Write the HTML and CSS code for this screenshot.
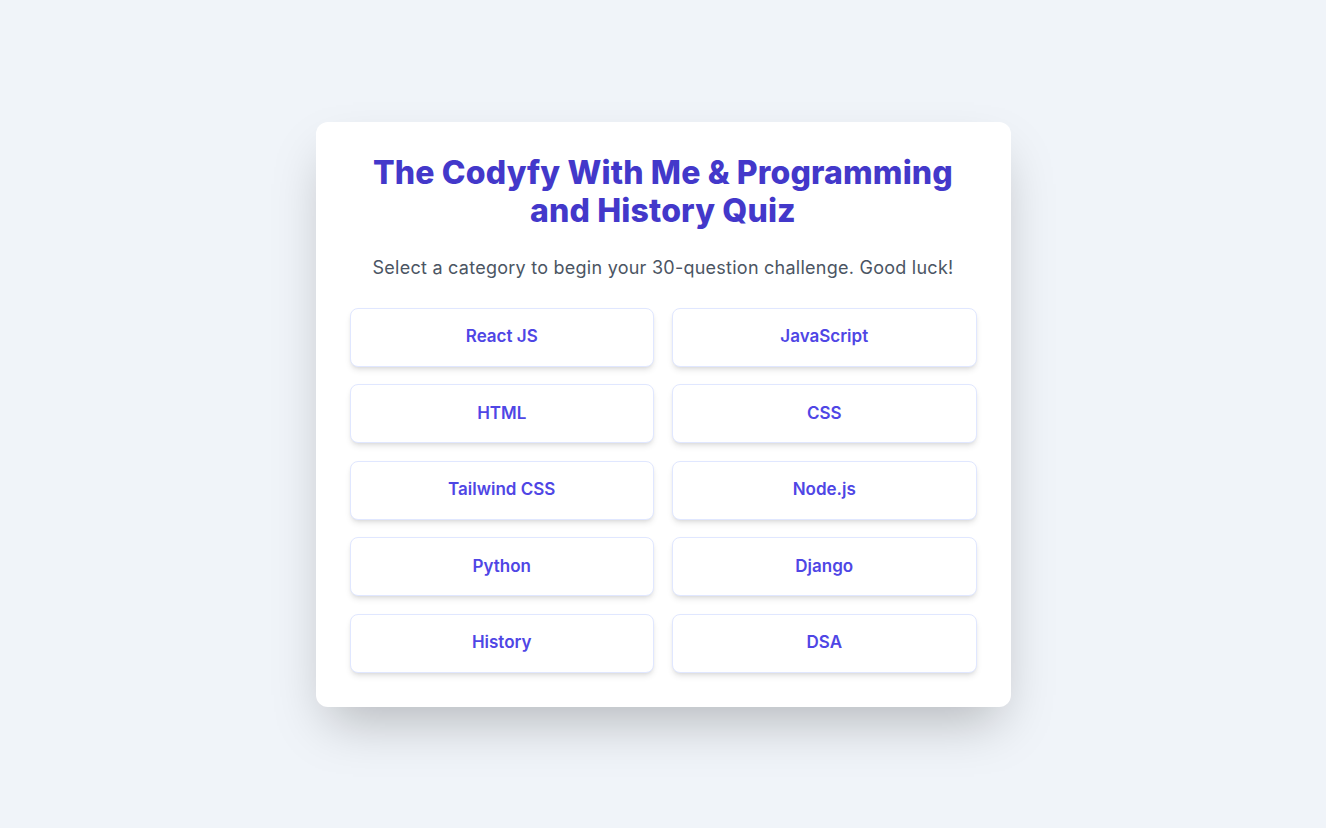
FILE: index.html
```html
<!DOCTYPE html>
<html lang="en">
<head>
<meta charset="utf-8">
<title>Quiz</title>
<link rel="stylesheet" href="styles.css">
</head>
<body>
<main class="page">
  <section class="card">
    <h1 class="title">The Codyfy With Me &amp; Programming and History Quiz</h1>
    <p class="subtitle">Select a category to begin your 30-question challenge. Good luck!</p>
    <div class="grid">
      <button class="cat">React JS</button>
      <button class="cat">JavaScript</button>
      <button class="cat">HTML</button>
      <button class="cat">CSS</button>
      <button class="cat">Tailwind CSS</button>
      <button class="cat">Node.js</button>
      <button class="cat">Python</button>
      <button class="cat">Django</button>
      <button class="cat">History</button>
      <button class="cat">DSA</button>
    </div>
  </section>
</main>
</body>
</html>
```

FILE: styles.css
```css
* { box-sizing: border-box; }
html, body { margin: 0; padding: 0; }
body {
  font-family: Inter, "Noto Sans", sans-serif;
  background: #f0f4f9;
}
.page {
  min-height: 100vh;
  display: flex;
  align-items: center;
  justify-content: center;
}
.card {
  width: 695px;
  background: #ffffff;
  border-radius: 12px;
  padding: 32px 34px 34px;
  box-shadow: 0 25px 50px -12px rgba(0, 0, 0, 0.25);
  text-align: center;
}
.title {
  margin: 0;
  font-size: 32px;
  line-height: 38px;
  font-weight: 800;
  letter-spacing: 0.15px;
  color: #4338ca;
}
.subtitle {
  margin: 25px 0 27px;
  font-size: 18px;
  line-height: 26px;
  letter-spacing: 0.25px;
  color: #4b5563;
}
.grid {
  display: grid;
  grid-template-columns: 1fr 1fr;
  column-gap: 18px;
  row-gap: 17.5px;
}
.cat {
  font-family: inherit;
  height: 59px;
  padding: 0 0 2px;
  background: #ffffff;
  border: 1px solid #e0e7ff;
  border-radius: 8px;
  box-shadow: 0 4px 6px -1px rgba(0, 0, 0, 0.1), 0 2px 4px -2px rgba(0, 0, 0, 0.1);
  color: #4f46e5;
  font-size: 17px;
  font-weight: 600;
  cursor: pointer;
}
```
